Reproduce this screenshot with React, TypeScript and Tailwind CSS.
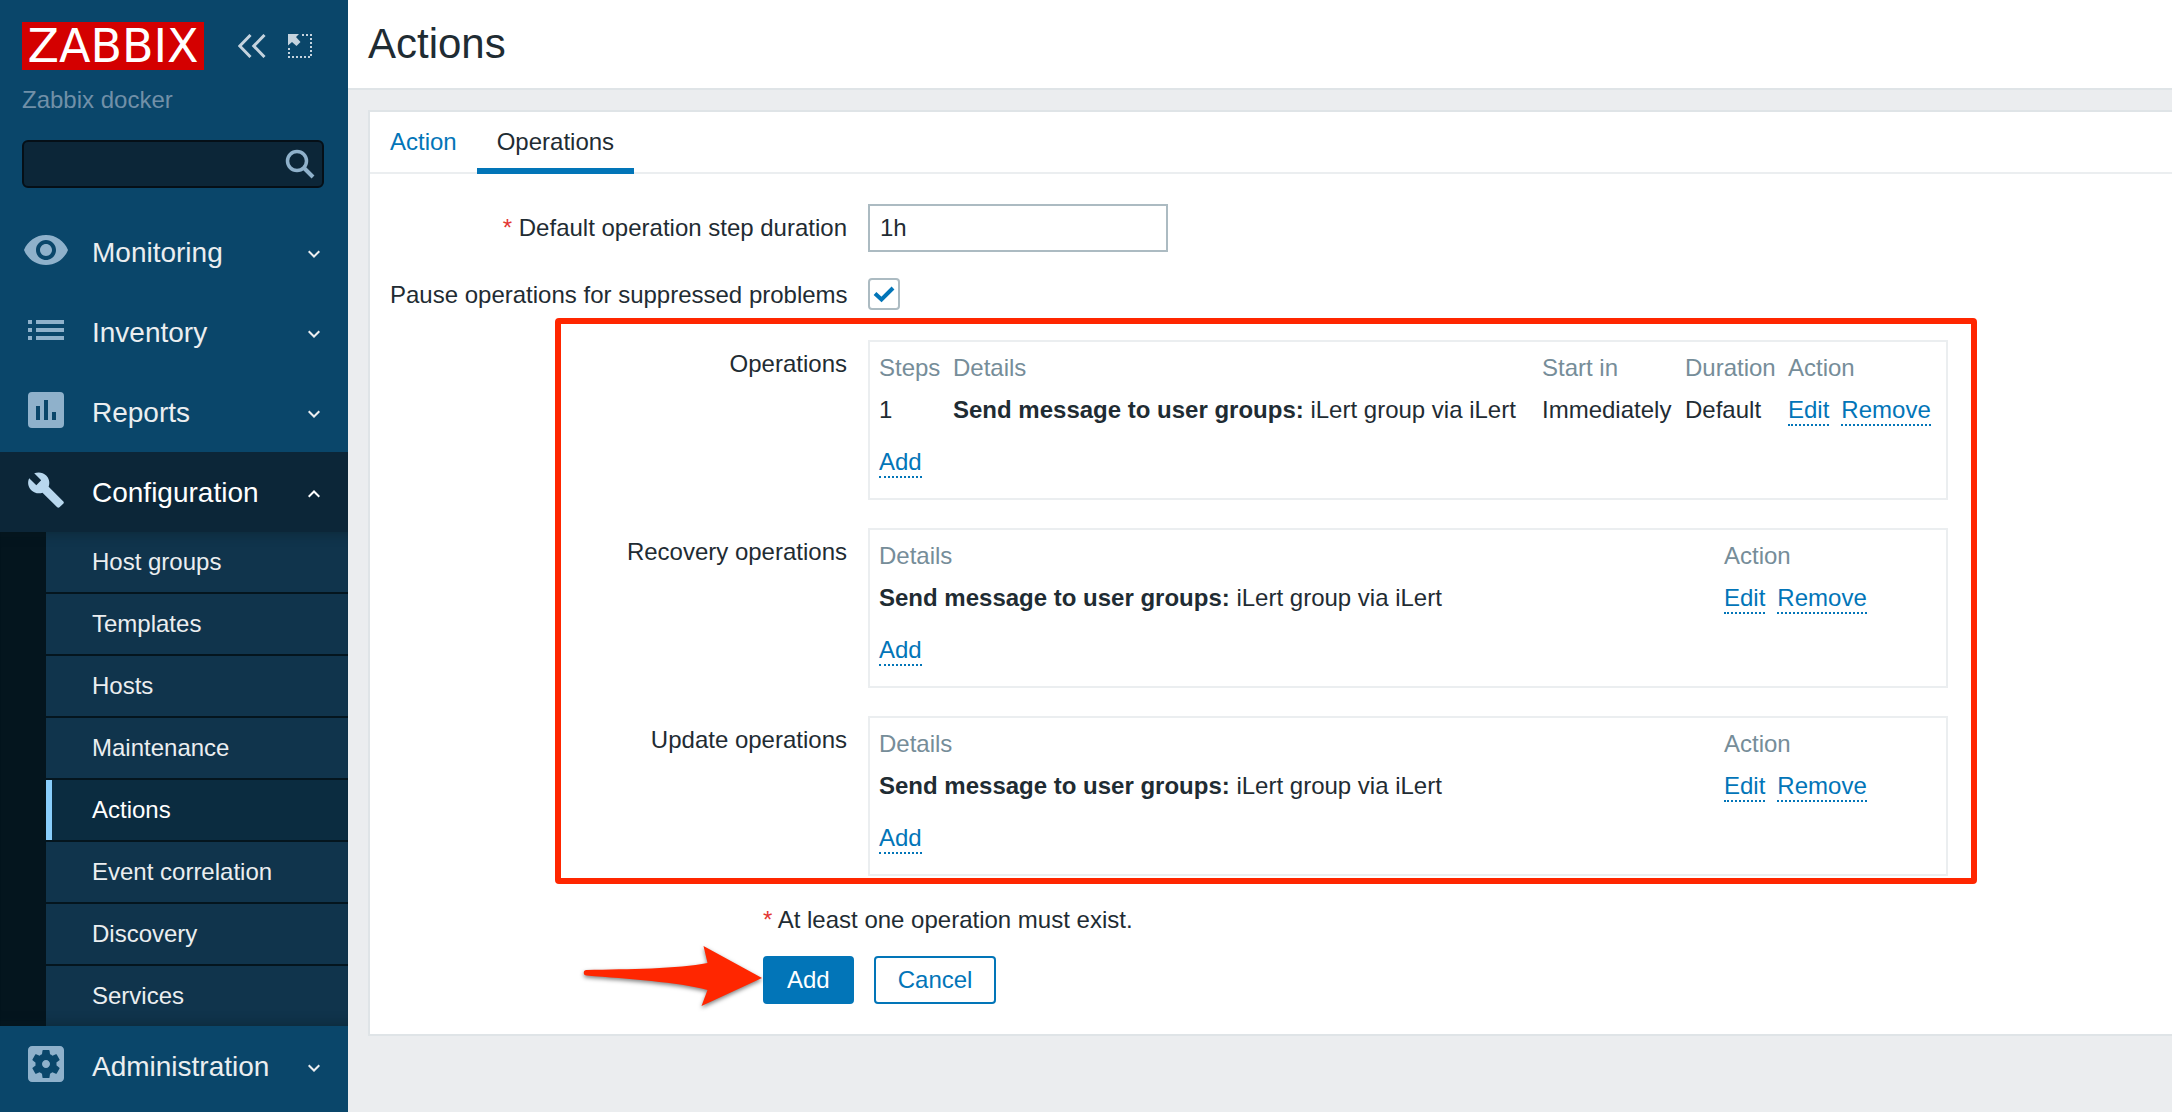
import { useState, type ReactNode } from "react";

const LINK = "border-b-2 border-dotted border-[#0275b8] pt-0.5 leading-7 text-[#0275b8]";

function Icon({ children }: { children: ReactNode }) {
  return (
    <svg viewBox="0 0 24 24" className="mb-1 size-12 shrink-0" fill="currentColor" aria-hidden="true">
      {children}
    </svg>
  );
}

const icons = {
  eye: (
    <Icon>
      <path d="M12 4.5C7 4.5 2.73 7.61 1 12c1.73 4.39 6 7.5 11 7.5s9.27-3.11 11-7.5c-1.73-4.39-6-7.5-11-7.5zM12 17c-2.76 0-5-2.24-5-5s2.24-5 5-5 5 2.24 5 5-2.24 5-5 5zm0-8c-1.66 0-3 1.34-3 3s1.34 3 3 3 3-1.34 3-3-1.34-3-3-3z" />
    </Icon>
  ),
  list: (
    <Icon>
      <path d="M3 7h2v2H3zM7 7h14v2H7zM3 11h2v2H3zM7 11h14v2H7zM3 15h2v2H3zM7 15h14v2H7z" />
    </Icon>
  ),
  chart: (
    <Icon>
      <path
        fillRule="evenodd"
        d="M5 3h14a2 2 0 0 1 2 2v14a2 2 0 0 1-2 2H5a2 2 0 0 1-2-2V5a2 2 0 0 1 2-2zM7 10v7h2v-7zM11 7v10h2V7zM15 13v4h2v-4z"
      />
    </Icon>
  ),
  wrench: (
    <Icon>
      <path
        transform="translate(2.3 2.3) scale(.81)"
        d="M22.7 19l-9.1-9.1c.9-2.3.4-5-1.5-6.9-2-2-5-2.4-7.4-1.3L9 6 6 9 1.6 4.7C.4 7.1.9 10.1 2.9 12.1c1.9 1.9 4.6 2.4 6.9 1.5l9.1 9.1c.4.4 1 .4 1.4 0l2.3-2.3c.5-.4.5-1.1.1-1.4z"
      />
    </Icon>
  ),
  gear: (
    <Icon>
      <path d="M12 10c-1.1 0-2 .9-2 2s.9 2 2 2 2-.9 2-2-.9-2-2-2zm7-7H5c-1.11 0-2 .9-2 2v14c0 1.1.89 2 2 2h14c1.11 0 2-.9 2-2V5c0-1.1-.89-2-2-2zm-1.75 9c0 .23-.02.46-.05.68l1.48 1.16c.13.11.17.3.08.45l-1.4 2.42c-.09.15-.27.21-.43.15l-1.74-.7c-.36.28-.76.51-1.18.69l-.26 1.85c-.03.17-.18.3-.35.3h-2.8c-.17 0-.32-.13-.35-.29l-.26-1.85c-.43-.18-.82-.41-1.18-.69l-1.74.7c-.16.06-.34 0-.43-.15l-1.4-2.42c-.09-.15-.05-.34.08-.45l1.48-1.16c-.03-.23-.05-.46-.05-.69 0-.23.02-.46.05-.68l-1.48-1.16c-.13-.11-.17-.3-.08-.45l1.4-2.42c.09-.15.27-.21.43-.15l1.74.7c.36-.28.76-.51 1.18-.69l.26-1.85c.03-.17.18-.3.35-.3h2.8c.17 0 .32.13.35.29l.26 1.85c.43.18.82.41 1.18.69l1.74-.7c.16-.06.34 0 .43.15l1.4 2.42c.09.15.05.34-.08.45l-1.48 1.16c.03.23.05.46.05.69z" />
    </Icon>
  ),
};

const configItems = [
  "Host groups",
  "Templates",
  "Hosts",
  "Maintenance",
  "Actions",
  "Event correlation",
  "Discovery",
  "Services",
];

function MenuItem({ icon, label, open = false }: { icon: ReactNode; label: string; open?: boolean }) {
  return (
    <button
      type="button"
      aria-expanded={open}
      className={
        open
          ? "flex h-20 w-full items-center bg-[#0c2638] pl-[22px] pr-7 text-[28px] text-white"
          : "flex h-20 w-full items-center pl-[22px] pr-7 text-[28px] text-[#ebeef0]"
      }
    >
      <span className={open ? "text-[#b8d7ee]" : "text-[#8fb1cb]"}>{icon}</span>
      <span className="ml-[22px] flex-1 pt-0.5 text-left">{label}</span>
      <svg viewBox="0 0 12 8" className="mt-1 h-2 w-3" fill="none" stroke="currentColor" strokeWidth="2" aria-hidden="true">
        <path d={open ? "M.7 6.8 6 1.5l5.300 5.300" : "M.7 1.200 6 6.500l5.300-5.300"} />
      </svg>
    </button>
  );
}

function Sidebar() {
  return (
    <aside className="w-[348px] shrink-0 bg-[#0a466a]">
      <div className="flex items-center pl-[22px] pr-9 pt-[22px]">
        <a
          href="#home"
          className="flex h-12 w-[182px] items-center justify-center bg-[#d40000] font-['DejaVu_Sans',sans-serif] text-[46px] leading-none text-white"
        >
          ZABBIX
        </a>
        <button type="button" aria-label="Collapse sidebar" className="ml-[34px] text-[#c5d3de]">
          <svg viewBox="0 0 28 24" className="h-6 w-7" fill="none" stroke="currentColor" strokeWidth="3">
            <path d="M12.500 1 1.800 12l10.700 11M26.500 1 15.800 12l10.700 11" />
          </svg>
        </button>
        <button type="button" aria-label="Hide sidebar" className="ml-[22px] text-[#c5d3de]">
          <svg viewBox="0 0 24 24" className="size-6" fill="currentColor">
            <path d="M0 0h11L8 3l4.500 5-4 4L4 8l-4 3.500z" />
            <path
              d="M14 0h2v2h-2zM18 0h2v2h-2zM22 0h2v2h-2zM22 4h2v2h-2zM22 8h2v2h-2zM22 12h2v2h-2zM22 16h2v2h-2zM22 20h2v2h-2zM0 14h2v2H0zM0 18h2v2H0zM0 22h2v2H0zM4 22h2v2H4zM8 22h2v2H8zM12 22h2v2h-2zM16 22h2v2h-2zM20 22h2v2h-2z"
            />
          </svg>
        </button>
      </div>
      <p className="ml-[22px] mt-4 leading-7 text-[#7190a8]">Zabbix docker</p>
      <form
        role="search"
        onSubmit={(e) => e.preventDefault()}
        className="mb-6 ml-[22px] mr-6 mt-[26px] flex h-12 items-center rounded-md border-2 border-[#050f17] bg-[#0c2638] pr-[7px]"
      >
        <input aria-label="Search" type="text" className="min-w-0 flex-1 bg-transparent px-2 text-white outline-none" />
        <button type="submit" aria-label="Search" className="text-[#8fb1cb]">
          <svg viewBox="0 0 30 30" className="size-[30px]" fill="none" stroke="currentColor">
            <circle cx="12" cy="12" r="9.500" strokeWidth="3.500" />
            <path d="m18.500 18.500 9.500 9.500" strokeWidth="4" />
          </svg>
        </button>
      </form>
      <nav aria-label="Main">
        <MenuItem icon={icons.eye} label="Monitoring" />
        <MenuItem icon={icons.list} label="Inventory" />
        <MenuItem icon={icons.chart} label="Reports" />
        <MenuItem icon={icons.wrench} label="Configuration" open />
        <div className="relative bg-[#04151e] pl-[46px]">
          <ul className="flex flex-col gap-0.5">
            {configItems.map((item) => (
              <li key={item}>
                <a
                  href="#"
                  className={
                    item === "Actions"
                      ? "flex h-[60px] items-center border-l-6 border-[#89cefc] bg-[#0b2c40] pl-10 text-white"
                      : "flex h-[60px] items-center bg-[#10344c] pl-[46px] text-[#ebeef0]"
                  }
                >
                  {item}
                </a>
              </li>
            ))}
          </ul>
          <div className="pointer-events-none absolute inset-0 shadow-[inset_0_14px_12px_-12px_rgba(8,24,32,0.4),inset_0_-14px_12px_-12px_rgba(8,24,32,0.4)]" />
        </div>
        <MenuItem icon={icons.gear} label="Administration" />
      </nav>
    </aside>
  );
}

function Required() {
  return <span className="text-[#e33734]">* </span>;
}

function RowActions() {
  return (
    <div className="flex gap-3">
      <button type="button" className={LINK}>
        Edit
      </button>
      <button type="button" className={LINK}>
        Remove
      </button>
    </div>
  );
}

interface Column {
  title: string;
  width: string;
  cell: ReactNode;
}

const message = (
  <>
    <b>Send message to user groups:</b> iLert group via iLert
  </>
);

const stepColumns: Column[] = [
  { title: "Steps", width: "w-[74px]", cell: "1" },
  { title: "Details", width: "w-[589px]", cell: message },
  { title: "Start in", width: "w-[143px]", cell: "Immediately" },
  { title: "Duration", width: "w-[103px]", cell: "Default" },
  { title: "Action", width: "w-auto", cell: <RowActions /> },
];

const plainColumns: Column[] = [
  { title: "Details", width: "w-[845px]", cell: message },
  { title: "Action", width: "w-auto", cell: <RowActions /> },
];

function OperationRow({ label, columns }: { label: string; columns: Column[] }) {
  return (
    <div className="flex gap-[21px]">
      <div className="flex h-12 w-[457px] items-center justify-end">{label}</div>
      <div className="w-[1080px] border-2 border-[#ebeef0] py-[5px] pl-[9px]">
        <table aria-label={label} className="w-full table-fixed text-left">
          <thead>
            <tr className="h-[42px] text-[#768d99]">
              {columns.map((c) => (
                <th key={c.title} scope="col" className={`p-0 font-normal ${c.width}`}>
                  {c.title}
                </th>
              ))}
            </tr>
          </thead>
          <tbody>
            <tr className="h-[42px]">
              {columns.map((c) => (
                <td key={c.title} className="whitespace-nowrap p-0">
                  {c.cell}
                </td>
              ))}
            </tr>
            <tr className="h-[62px]">
              <td colSpan={columns.length} className="p-0">
                <div className="flex">
                  <button type="button" className={LINK}>
                    Add
                  </button>
                </div>
              </td>
            </tr>
          </tbody>
        </table>
      </div>
    </div>
  );
}

function Arrow() {
  return (
    <svg
      viewBox="0 0 180 64"
      className="absolute right-full top-[-11px] h-16 w-[180px] drop-shadow-[0_2px_2px_rgba(0,0,0,0.5)]"
      fill="#ff2600"
      aria-hidden="true"
    >
      <path d="M3.500 25C45 24 95 24 124.500 18L120.500 1 179 33 118.500 61 124.500 45C95 37 45 34 3.500 30.500A2.700 2.700 0 0 1 3.500 25z" />
    </svg>
  );
}

export default function App() {
  const [duration, setDuration] = useState("1h");
  const [paused, setPaused] = useState(true);

  return (
    <div className="flex min-h-screen bg-[#ebedef] font-['Liberation_Sans',Arial,sans-serif] text-[24px] leading-7 text-[#1f2c33]">
      <Sidebar />
      <div className="min-w-0 flex-1 overflow-hidden">
        <header className="flex h-[90px] items-center border-b-2 border-[#dfe4e7] bg-white pl-5">
          <h1 className="text-[42px] leading-none">Actions</h1>
        </header>
        <main className="ml-5 mt-5 border-2 border-r-0 border-[#dfe4e7] bg-white">
          <nav aria-label="Action form" className="flex border-b-2 border-[#ebeef0]">
            <a href="#action" className="flex h-[60px] items-center px-5 text-[#0275b8]">
              Action
            </a>
            <a href="#operations" aria-current="page" className="relative flex h-[60px] items-center px-5">
              Operations
              <span className="absolute inset-x-0 -bottom-0.5 h-1.5 bg-[#0275b8]" />
            </a>
          </nav>
          <form onSubmit={(e) => e.preventDefault()} className="px-5 py-[30px]">
            <div className="flex items-center gap-[21px]">
              <label htmlFor="duration" className="w-[457px] text-right">
                <Required />
                Default operation step duration
              </label>
              <input
                id="duration"
                type="text"
                value={duration}
                onChange={(e) => setDuration(e.target.value)}
                className="h-12 w-[300px] border-2 border-[#acbbc2] bg-white px-2.5 outline-none"
              />
            </div>
            <div className="mt-[26px] flex items-center gap-[21px]">
              <label htmlFor="pause" className="w-[457px] whitespace-nowrap pt-0.5 text-right">
                Pause operations for suppressed problems
              </label>
              <span className="relative size-8">
                <input
                  id="pause"
                  type="checkbox"
                  checked={paused}
                  onChange={(e) => setPaused(e.target.checked)}
                  className="peer block size-8 appearance-none rounded border-2 border-[#acbbc2] bg-white"
                />
                <svg
                  viewBox="0 0 32 32"
                  className="pointer-events-none absolute inset-0 hidden size-8 peer-checked:block"
                  fill="none"
                  stroke="#0275b8"
                  strokeWidth="4"
                  aria-hidden="true"
                >
                  <path d="m7 15.500 6.500 6L25 10" />
                </svg>
              </span>
            </div>
            <div className="relative mt-[30px] flex w-fit flex-col gap-7">
              <OperationRow label="Operations" columns={stepColumns} />
              <OperationRow label="Recovery operations" columns={plainColumns} />
              <OperationRow label="Update operations" columns={plainColumns} />
              <div className="pointer-events-none absolute -bottom-2 -right-[29px] -top-[22px] left-[165px] rounded border-6 border-[#ff2600]" />
            </div>
            <div className="ml-[373px] mt-[30px]">
              <p>
                <Required />
                At least one operation must exist.
              </p>
              <div className="relative mt-[22px] flex w-fit gap-5">
                <Arrow />
                <button type="submit" className="h-12 rounded border-2 border-[#0275b8] bg-[#0275b8] px-[22px] text-white">
                  Add
                </button>
                <button type="button" className="h-12 rounded border-2 border-[#0275b8] bg-white px-[22px] text-[#0275b8]">
                  Cancel
                </button>
              </div>
            </div>
          </form>
        </main>
      </div>
    </div>
  );
}
